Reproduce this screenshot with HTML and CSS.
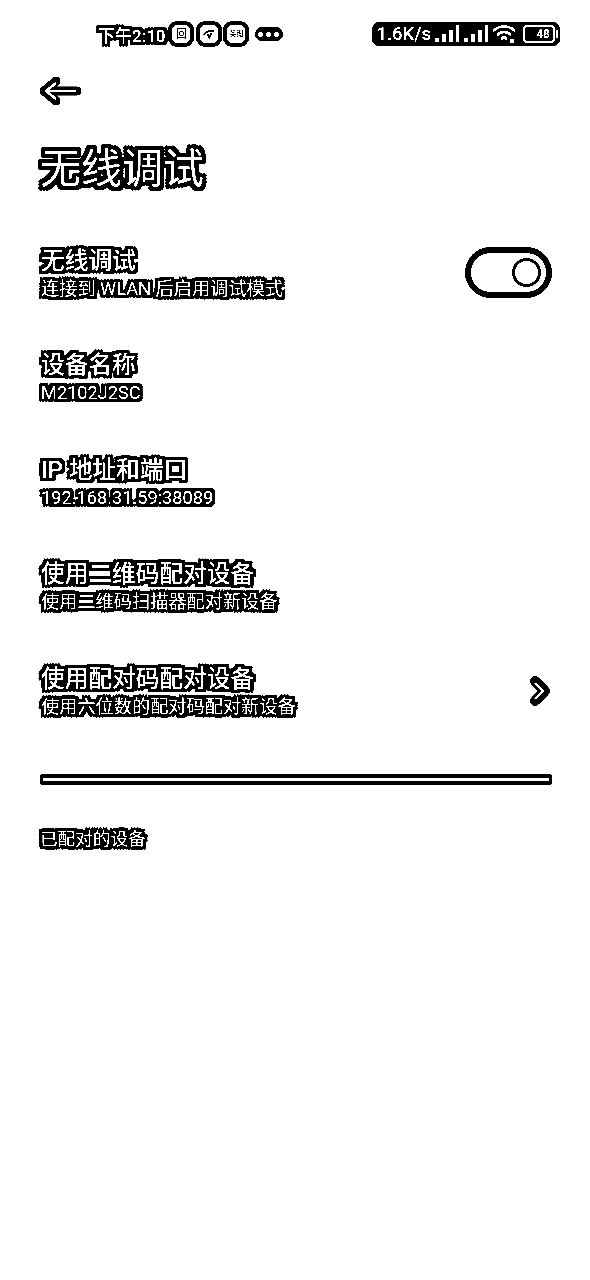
FILE: index.html
```html
<!DOCTYPE html>
<html lang="zh-CN">
<head>
<meta charset="utf-8">
<title>无线调试</title>
<link rel="stylesheet" href="styles.css">
</head>
<body>
<div class="screen">
  <header class="status">
    <div class="status-left">
      <span class="time">下午2:10</span>
      <span class="app"><span class="app-text">回</span></span>
      <span class="app"><svg viewBox="0 0 16 16" width="14" height="14"><path d="M2 9C4 5 10 3 14 5M6 8 9 13M11 7 8 13" fill="none" stroke="#000" stroke-width="2"/></svg></span>
      <span class="app"><span class="app-text small">英图</span></span>
      <span class="more"><i></i><i></i><i></i></span>
    </div>
    <div class="status-right">
      <span class="speed">1.6K/s</span>
      <svg class="sys" viewBox="0 0 26 20" width="26" height="20"><path d="M1 14h4v4H1zM8 10h4v8H8zM15 6h4v12h-4zM22 1h3v17h-3z" fill="#fff"/></svg>
      <svg class="sys" viewBox="0 0 26 20" width="26" height="20"><path d="M1 14h4v4H1zM8 10h4v8H8zM15 6h4v12h-4zM22 1h3v17h-3z" fill="#fff"/></svg>
      <svg class="sys" viewBox="0 0 26 20" width="26" height="20"><path d="M1 7C7 1 17 1 23 7M5 11C9 7 15 7 19 11M9 15C11 13 13 13 15 15" fill="none" stroke="#fff" stroke-width="2.6"/><circle cx="20" cy="17" r="2.5" fill="#fff"/></svg>
      <span class="battery"><span class="battery-body">48</span><span class="battery-cap"></span></span>
    </div>
  </header>

  <nav class="nav">
    <svg class="back" viewBox="0 0 44 32" width="44" height="32"><path d="M18 6 6 16 18 26M7 16H39" fill="none" stroke="#000" stroke-width="9" stroke-linejoin="round" stroke-linecap="round"/><path d="M18 8 8 16 18 24M9 16H38" fill="none" stroke="#fff" stroke-width="2.4"/></svg>
  </nav>

  <h1 class="title">无线调试</h1>

  <section class="list">
    <div class="row">
      <div class="texts">
        <div class="name">无线调试</div>
        <div class="desc">连接到 WLAN 后启用调试模式</div>
      </div>
      <div class="toggle"><span class="knob"></span></div>
    </div>
    <div class="row">
      <div class="texts">
        <div class="name">设备名称</div>
        <div class="desc">M2102J2SC</div>
      </div>
    </div>
    <div class="row">
      <div class="texts">
        <div class="name">IP 地址和端口</div>
        <div class="desc">192.168.31.59:38089</div>
      </div>
    </div>
    <div class="row">
      <div class="texts">
        <div class="name">使用二维码配对设备</div>
        <div class="desc">使用二维码扫描器配对新设备</div>
      </div>
    </div>
    <div class="row">
      <div class="texts">
        <div class="name">使用配对码配对设备</div>
        <div class="desc">使用六位数的配对码配对新设备</div>
      </div>
      <svg class="chevron" viewBox="0 0 24 30" width="24" height="30"><path d="M6 5 16 15 6 25" fill="none" stroke="#000" stroke-width="10" stroke-linejoin="round" stroke-linecap="round"/><path d="M6 7 14 15 6 23" fill="none" stroke="#fff" stroke-width="2.4"/></svg>
    </div>
  </section>

  <div class="divider"></div>
  <div class="section-label">已配对的设备</div>
</div>
</body>
</html>
```

FILE: styles.css
```css
* { box-sizing: border-box; }
html, body { margin: 0; padding: 0; background: #fff; }
body { width: 590px; height: 1280px; overflow: hidden; }

.screen {
  width: 590px;
  height: 1280px;
  background: #fff;
  color: #fff;
  font-family: "Roboto", "Noto Sans CJK SC", sans-serif;
  filter: contrast(40);
}

.time, .name, .desc, .section-label {
  text-shadow:
    0 0 2px #000, 0 0 2px #000, 0 0 3px #000,
    2px 0 1px #000, -2px 0 1px #000, 0 2px 1px #000, 0 -2px 1px #000,
    2px 2px 1px #000, -2px -2px 1px #000, 2px -2px 1px #000, -2px 2px 1px #000,
    3px 0 1px #000, -3px 0 1px #000, 0 3px 1px #000, 0 -3px 1px #000,
    3px 2px 1px #000, -3px -2px 1px #000, 3px -2px 1px #000, -3px 2px 1px #000,
    3px 3px 1px #000, -3px -3px 1px #000, 3px -3px 1px #000, -3px 3px 1px #000;
}
.title {
  text-shadow:
    0 0 2px #000, 0 0 2px #000, 0 0 3px #000,
    2px 0 1px #000, -2px 0 1px #000, 0 2px 1px #000, 0 -2px 1px #000,
    2px 2px 1px #000, -2px -2px 1px #000, 2px -2px 1px #000, -2px 2px 1px #000,
    4px 0 1px #000, -4px 0 1px #000, 0 4px 1px #000, 0 -4px 1px #000,
    4px 3px 1px #000, -4px -3px 1px #000, 4px -3px 1px #000, -4px 3px 1px #000,
    3px 4px 1px #000, -3px -4px 1px #000, 3px -4px 1px #000, -3px 4px 1px #000;
}

.status {
  height: 52px;
  padding: 20px 30px 0 98px;
  display: flex;
  justify-content: space-between;
  align-items: flex-start;
}
.status-left, .status-right { display: flex; align-items: center; height: 28px; }
.time { font-size: 17px; font-weight: 500; margin-right: 5px; }
.app {
  width: 22px; height: 22px; margin-right: 5.5px;
  background: #fff; border: 2px solid #000; border-radius: 7px;
  outline: 2px solid #000;
  display: flex; align-items: center; justify-content: center;
  color: #000;
}
.app-text { font-size: 11px; line-height: 1; }
.app-text.small { font-size: 7px; white-space: nowrap; }
.more {
  width: 28px; height: 14px; margin-left: 2px;
  background: #000; border-radius: 7px;
  display: flex; align-items: center; justify-content: center; gap: 3px;
}
.more i { width: 5px; height: 5px; border-radius: 50%; background: #fff; }

.status-right { background: #000; border-radius: 7px; padding: 0 2px 0 4px; height: 24px; margin-top: 2px; }
.speed { font-size: 18.5px; font-weight: 500; margin-right: 3px; }
.sys { margin-right: 3px; }
.battery { display: flex; align-items: center; margin-left: 2px; }
.battery-body {
  width: 32px; height: 18px; border: 2px solid #fff; border-radius: 4px;
  background: #000; color: #fff; font: 700 12px/14px "Roboto", sans-serif; text-align: right; padding-right: 3px;
}
.battery-cap { width: 2px; height: 8px; background: #fff; margin-left: 1px; }

.nav { height: 44px; padding: 0 0 0 38px; display: flex; align-items: center; margin-top: 21px; }
.back { display: block; margin-top: -8px; }

.title {
  margin: 22px 0 0 40px;
  font-size: 41px;
  line-height: 60px;
  font-weight: 400;
}

.list { margin-top: 47px; padding: 0 38px 0 41px; }
.row {
  height: 104.4px;
  display: flex;
  justify-content: space-between;
  align-items: flex-start;
}
.texts { display: flex; flex-direction: column; }
.name { font-size: 23.7px; line-height: 30px; font-weight: 500; }
.desc { font-size: 18.2px; line-height: 26px; }

.toggle {
  width: 87px; height: 51px; margin-top: 1px;
  border: 6px solid #000; border-radius: 26px; background: #fff;
  display: flex; align-items: center; justify-content: flex-end; padding-right: 5px;
}
.knob { width: 29px; height: 29px; border: 3px solid #000; border-radius: 50%; }
.chevron { margin-top: 12px; margin-right: -1px; }

.divider {
  margin: 6px 38px 0 40px;
  height: 11px;
  background: #000;
  border-radius: 3px;
  display: flex;
  align-items: center;
}
.divider::after {
  content: "";
  display: block;
  width: 100%;
  height: 3px;
  margin: 0 3px;
  background: #fff;
}
.section-label {
  margin: 41px 0 0 40px;
  font-size: 17.6px;
  line-height: 26px;
}
```
